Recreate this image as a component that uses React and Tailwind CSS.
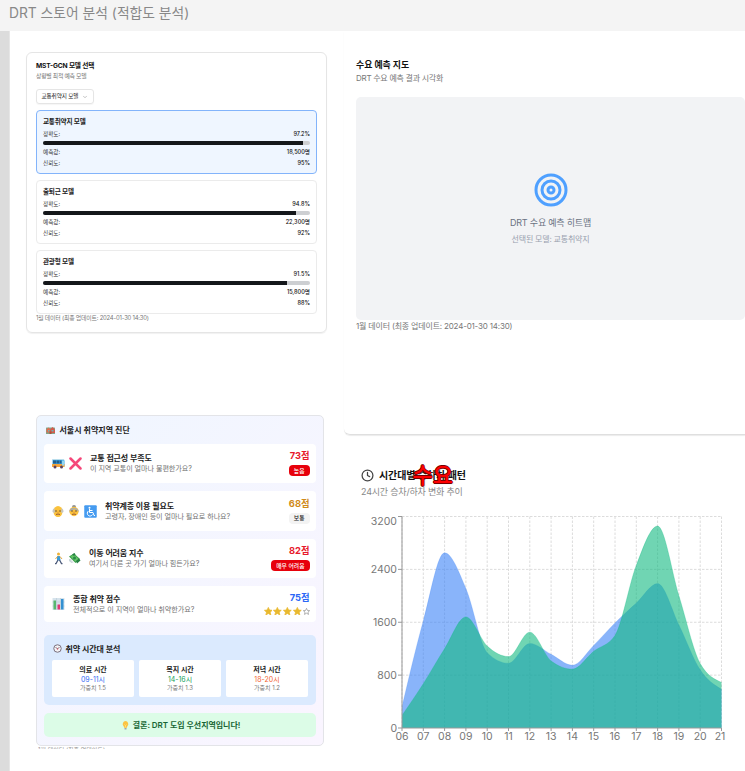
import React from "react";
import { ChevronDown, Clock } from "lucide-react";

const models = [
  { name: "교통취약지 모델", accuracy: "97.2%", value: 97.2, demand: "18,500명", trust: "95%", active: true },
  { name: "출퇴근 모델", accuracy: "94.8%", value: 94.8, demand: "22,300명", trust: "92%" },
  { name: "관광형 모델", accuracy: "91.5%", value: 91.5, demand: "15,800명", trust: "88%" },
];

function Row({ label, value }) {
  return (
    <div className="flex h-[11px] items-center justify-between text-[5.6px] leading-none text-[#333]">
      <span>{label}</span>
      <span className="font-medium text-[#111]">{value}</span>
    </div>
  );
}

function ModelCard({ model }) {
  return (
    <div
      className={
        "flex h-[64px] flex-col rounded-[4px] border px-[6px] pt-[6px] " +
        (model.active ? "border-[#83b4fb] bg-[#eff6ff]" : "border-[#ebebeb] bg-white")
      }
    >
      <div className="flex h-[10px] items-center text-[6.6px] font-semibold leading-none tracking-[-0.2px] text-[#222]">{model.name}</div>
      <div className="mt-[2px]">
        <Row label="정확도:" value={model.accuracy} />
      </div>
      <div className="mb-[3px] mt-px h-[3.5px] shrink-0 overflow-hidden rounded-full bg-[#cdcfd2]">
        <div className="h-full bg-[#14171a]" style={{ width: model.value + "%" }} />
      </div>
      <Row label="예측값:" value={model.demand} />
      <Row label="신뢰도:" value={model.trust} />
    </div>
  );
}

function Houses() {
  return (
    <svg viewBox="0 0 18 14" className="h-[7px] w-[9px]">
      <rect y="1" width="18" height="13" rx="1" fill="#7fa58a" />
      <path d="M1 5 5 1l4 4v6H1z" fill="#e26c4d" />
      <path d="M8 5 13 0l5 5v7H8z" fill="#d25b4c" />
      <path d="M4 6h3v3H4zM11 6h4v3h-4z" fill="#69b4b4" />
      <path d="M7 9h4v5H7z" fill="#ae5039" />
    </svg>
  );
}

function Bus() {
  return (
    <svg viewBox="0 0 26 22" className="h-[11px] w-[13px]">
      <path d="M1 3h23l1 3v11H1z" fill="#3ba5e7" />
      <path d="M0 12h25v6H0z" fill="#f6a43b" />
      <path d="M2 5h6v6H2zM9 5h5v6H9zM15 5h4v6h-4z" fill="#265e89" />
      <path d="M20 5h4v10h-4z" fill="#94d5ef" />
      <circle cx="6" cy="18" r="3" fill="#5b405d" />
      <circle cx="19" cy="18" r="3" fill="#5b405d" />
      <path d="M1 3h23" stroke="#b8ddec" strokeWidth="2" />
    </svg>
  );
}

function Cross() {
  return (
    <svg viewBox="0 0 26 26" className="h-[13px] w-[13px]">
      <path d="m3 3 20 20M23 3 3 23" stroke="#f5487a" strokeWidth="5" strokeLinecap="round" />
    </svg>
  );
}

function Elder({ woman }) {
  return (
    <svg viewBox="0 0 24 24" className="h-[12px] w-[12px]">
      {woman && <circle cx="12" cy="4" r="4" fill="#8f9092" />}
      {woman && <path d="M3 13C2 2 22 2 21 13l-1 3H4z" fill="#999b9d" />}
      <ellipse cx="12" cy="13" rx="9" ry={woman ? 9.5 : 11} fill="#fbc23c" />
      {woman ? (
        <path d="M3 12c1-8 15-9 18 0-4 0-6-2-9-4-2 3-5 4-9 4z" fill="#aaacae" />
      ) : (
        <path d="M1 13c0-3 1-6 4-6l1 8c-3 1-5 0-5-2zM23 13c0-3-1-6-4-6l-1 8c3 1 5 0 5-2z" fill="#c6c6c0" />
      )}
      <path d="M6 12h4M14 12h4" stroke="#785a34" strokeWidth="2" />
      <path d="M12 13v3" stroke="#e79534" strokeWidth="2" />
      <path d="M8 19q4-2 8 0" fill="none" stroke="#9b5a34" strokeWidth="2" />
    </svg>
  );
}

function Wheelchair() {
  return (
    <svg viewBox="0 0 26 26" className="h-[13px] w-[13px]">
      <rect x="0.5" y="0.5" width="25" height="25" rx="2" fill="#459bf0" />
      <circle cx="11" cy="5.5" r="2" fill="#fff" />
      <path d="M11 8v7h7l2 6h2M11 11h6" fill="none" stroke="#fff" strokeWidth="2" />
      <path d="M9 12a5.5 5.5 0 1 0 8 7" fill="none" stroke="#fff" strokeWidth="2" />
    </svg>
  );
}

function Walker() {
  return (
    <svg viewBox="0 0 24 26" className="h-[13px] w-[12px]">
      <circle cx="13" cy="4" r="3" fill="#efb238" />
      <path d="M10 8h6l1 9h-7z" fill="#3b9bd8" />
      <path d="m11 9-4 5M16 9l4 5" stroke="#e7a83c" strokeWidth="2" />
      <path d="m12 16-4 7H6M15 16l4 7h2" fill="none" stroke="#4a5878" strokeWidth="2.500" />
    </svg>
  );
}

function Money() {
  return (
    <svg viewBox="0 0 26 26" className="h-[13px] w-[13px]">
      <path d="m2 9 10-6 12 11-9 8z" fill="#3a9c4b" />
      <path d="m5 9 7-4 9 9-6 5z" fill="#65c567" />
      <path d="m8 5 5-3 2 3-3 3zM16 18l6-5 3 4-7 6z" fill="#258043" />
      <circle cx="13" cy="12" r="3" fill="#298947" />
      <path d="m2 14 7 1-3 3 6 2-5 2-5-4z" fill="#c8d4d8" />
    </svg>
  );
}

function BarEmoji() {
  return (
    <svg viewBox="0 0 24 24" className="h-[12px] w-[13px]">
      <rect width="24" height="24" rx="1" fill="#d6e3ec" />
      <path d="M0 8h24M0 16h24M8 0v24M16 0v24" stroke="#b3c4d0" />
      <rect x="2" y="5" width="5" height="18" fill="#57b870" />
      <rect x="10" y="13" width="5" height="10" fill="#e13774" />
      <rect x="17" y="2" width="5" height="21" fill="#3390d2" />
    </svg>
  );
}

function ClockEmoji() {
  return (
    <svg viewBox="0 0 18 18" className="h-[9px] w-[9px]">
      <circle cx="9" cy="9" r="7.5" fill="#f4f3f6" stroke="#79717e" strokeWidth="2" />
      <path d="m5 6 4 4 4-4" fill="none" stroke="#654c5a" strokeWidth="1.5" />
      <circle cx="9" cy="10" r="1.3" fill="#d24e5d" />
    </svg>
  );
}

function Bulb() {
  return (
    <svg viewBox="0 0 14 18" className="h-[9px] w-[7px]">
      <path d="M7 0a6 6 0 0 0-4 10l2 4h4l2-4A6 6 0 0 0 7 0z" fill="#fbc342" />
      <path d="m5 7 2 2 2-2M7 9v4" fill="none" stroke="#fff0a8" />
      <path d="M5 14h4v3H5z" fill="#9ca8ae" />
    </svg>
  );
}

function Stars() {
  return (
    <div className="flex h-[9px] items-center gap-[1px]">
      {[0, 1, 2, 3, 4].map((i) => (
        <svg key={i} viewBox="0 0 20 20" className={i < 4 ? "h-[8.700px] w-[8.700px]" : "h-[7px] w-[7px]"}>
          <path
            d="m10 1 2.700 6 6.300.6-4.800 4.200 1.500 6.500L10 14.900l-5.700 3.400 1.500-6.500L1 7.600 7.300 7z"
            fill={i < 4 ? "#e9b92f" : "#fff"}
            stroke={i < 4 ? "#e9b92f" : "#777"}
            strokeWidth={i < 4 ? 1.8 : 1.6}
            strokeLinejoin="round"
          />
        </svg>
      ))}
    </div>
  );
}

function Metric({ icons, title, question, score, scoreClass, children, rowClass }) {
  return (
    <div className={"flex items-center justify-between rounded-[4px] bg-white pl-[8px] pr-[6.500px] " + rowClass}>
      <div className="flex items-center gap-[8px]">
        <div className="flex items-center gap-[4px]">{icons}</div>
        <div className="flex flex-col gap-[3px] whitespace-nowrap">
          <span className="text-[8px] font-semibold leading-[8px] tracking-[-0.12px] text-[#222]">{title}</span>
          <span className="text-[7.100px] leading-[8px] tracking-[-0.06px] text-[#737373]">{question}</span>
        </div>
      </div>
      <div className="flex flex-col items-end gap-[4px]">
        <span className={"text-[9.3px] font-bold leading-[10px] " + scoreClass}>{score}</span>
        {children}
      </div>
    </div>
  );
}

const times = [
  { name: "의료 시간", range: "09-11시", weight: "가중치 1.5", color: "text-[#356df3]" },
  { name: "복지 시간", range: "14-16시", weight: "가중치 1.3", color: "text-[#16a15b]" },
  { name: "저녁 시간", range: "18-20시", weight: "가중치 1.2", color: "text-[#f26432]" },
];

const boarding = [320, 1620, 2650, 2110, 1140, 980, 1280, 1115, 950, 1250, 1590, 1890, 2185, 1560, 880, 585];
const alighting = [190, 670, 1200, 1680, 1240, 1080, 1450, 1015, 890, 1160, 1400, 2460, 3055, 2000, 975, 690];

const LEFT = 42;
const TOP = 6.5;
const WIDTH = 319.5;
const HEIGHT = 211.5;
const STEP = WIDTH / 15;
const BASE = TOP + HEIGHT;

// Monotone cubic area through hourly values.
function areaPath(values) {
  const pts = values.map((v, i) => [LEFT + i * STEP, BASE - (v / 3200) * HEIGHT]);
  const slopes = pts.slice(1).map((p, i) => (p[1] - pts[i][1]) / STEP);
  const n = pts.length;
  const t = new Array(n).fill(0);
  for (let i = 1; i < n - 1; i++) {
    const a = slopes[i - 1];
    const b = slopes[i];
    t[i] = (Math.sign(a) + Math.sign(b)) * Math.min(Math.abs(a), Math.abs(b), Math.abs(a + b) / 4);
  }
  t[0] = (3 * slopes[0] - t[1]) / 2;
  t[n - 1] = (3 * slopes[n - 2] - t[n - 2]) / 2;
  const d = STEP / 3;
  let path = `M${pts[0][0]},${pts[0][1]}`;
  for (let i = 1; i < n; i++) {
    const [x0, y0] = pts[i - 1];
    const [x1, y1] = pts[i];
    path += `C${x0 + d},${y0 + d * t[i - 1]} ${x1 - d},${y1 - d * t[i]} ${x1},${y1}`;
  }
  return { line: path, area: path + `L${LEFT + WIDTH},${BASE}L${LEFT},${BASE}Z` };
}

function Chart() {
  const blue = areaPath(boarding);
  const green = areaPath(alighting);
  const hours = boarding.map((_, i) => String(i + 6).padStart(2, "0"));
  return (
    <svg width="385" height="240" viewBox="0 0 385 240" className="block">
      <g stroke="#dcdcdc" strokeDasharray="2.500 1.500">
        {hours.map((h, i) => (
          <line key={h} x1={LEFT + i * STEP} x2={LEFT + i * STEP} y1={TOP} y2={BASE} />
        ))}
        {[0, 1, 2, 3].map((i) => (
          <line key={i} x1={LEFT} x2={LEFT + WIDTH} y1={TOP + (i * HEIGHT) / 4} y2={TOP + (i * HEIGHT) / 4} />
        ))}
      </g>
      <path d={blue.area} fill="#3b82f6" fillOpacity="0.6" />
      <path d={blue.line} fill="none" stroke="#3b82f6" strokeOpacity="0.3" strokeWidth="0.7" />
      <path d={green.area} fill="#10b981" fillOpacity="0.6" />
      <path d={green.line} fill="none" stroke="#10b981" strokeOpacity="0.4" strokeWidth="0.7" />
      <g stroke="#999">
        <path d={`M${LEFT},${TOP}V${BASE}H${LEFT + WIDTH}`} fill="none" />
        {[0, 1, 2, 3, 4].map((i) => (
          <line key={i} x1={LEFT - 4} x2={LEFT} y1={TOP + (i * HEIGHT) / 4} y2={TOP + (i * HEIGHT) / 4} />
        ))}
        {hours.map((h, i) => (
          <line key={h} x1={LEFT + i * STEP} x2={LEFT + i * STEP} y1={BASE} y2={BASE + 3} />
        ))}
      </g>
      <g fill="#777" fontSize="10.500">
        {[3200, 2400, 1600, 800, 0].map((v, i) => (
          <text key={v} x={LEFT - 5} y={TOP + (i * HEIGHT) / 4 + (i === 0 ? 8 : 4)} textAnchor="end">
            {v}
          </text>
        ))}
        {hours.map((h, i) => (
          <text key={h} x={LEFT + i * STEP - (i === 15 ? 1.5 : 0)} y={BASE + 12} textAnchor="middle" fontSize="10.500">
            {h}
          </text>
        ))}
      </g>
    </svg>
  );
}

export default function App() {
  return (
    <div className="h-[771px] w-[745px] overflow-hidden bg-white font-[Inter,'Noto_Sans_CJK_KR',sans-serif] text-[#111]">
      <header className="flex h-[31px] items-center bg-[#f4f4f4] pb-[4px] pl-[9px] text-[13.800px] leading-none text-[#888]">
        <span className="whitespace-nowrap">DRT 스토어 분석 (적합도 분석)</span>
      </header>
      <div className="flex h-[740px]">
        <div className="w-[10px] shrink-0 border-r border-[#e6e6e6] bg-[#dcdcdc]" />
        <div className="ml-[16px] flex w-[301px] shrink-0 flex-col pt-[21px]">
          <section className="flex h-[281px] shrink-0 flex-col rounded-[6px] border border-[#e5e5e5] px-[9px] pt-[8px] shadow-[0_1px_1px_rgba(0,0,0,0.06)]">
            <h2 className="flex h-[10px] items-center text-[6.700px] font-bold leading-none tracking-[-0.2px]">MST-GCN 모델 선택</h2>
            <p className="flex h-[10px] items-center text-[5.900px] leading-none tracking-[-0.28px] text-[#777]">상황별 최적 예측 모델</p>
            <button className="mt-[8px] flex h-[15px] w-[58px] items-center justify-between rounded-[3px] border border-[#e5e5e5] pl-[4.500px] pr-[5px] text-[5.600px] leading-none tracking-[-0.1px] text-[#222] shadow-[0_1px_1px_rgba(0,0,0,0.04)]">
              <span className="whitespace-nowrap">교통취약지 모델</span>
              <ChevronDown size={6} className="shrink-0" color="#888" />
            </button>
            <div className="mt-[6px] flex flex-col gap-[6px]">
              {models.map((m) => (
                <ModelCard key={m.name} model={m} />
              ))}
            </div>
            <p className="text-[5.900px] leading-[7px] tracking-[-0.2px] text-[#777]">1월 데이터 (최종 업데이트: 2024-01-30 14:30)</p>
          </section>

          <section className="ml-[10px] mt-[82px] flex h-[331px] w-[288px] shrink-0 flex-col rounded-[5px] border border-[#e3e4e8] bg-gradient-to-br from-[#eff6ff] to-[#faf5ff] px-[7px] pt-[9px]">
            <h2 className="flex h-[10px] items-center gap-[5px] pl-[1.500px] text-[8px] font-semibold leading-none text-[#222]">
              <Houses />
              서울시 취약지역 진단
            </h2>
            <div className="mt-[9px] flex flex-col gap-[8px]">
              <Metric
                rowClass="h-[39px]"
                icons={<><Bus /><Cross /></>}
                title="교통 접근성 부족도"
                question="이 지역 교통이 얼마나 불편한가요?"
                score="73점"
                scoreClass="text-[#e7192c]"
              >
                <span className="flex h-[11px] items-center rounded-[4px] bg-[#e7000b] px-[5px] text-[5.800px] font-medium leading-none text-white">높음</span>
              </Metric>
              <Metric
                rowClass="h-[40px]"
                icons={<><Elder /><Elder woman /><Wheelchair /></>}
                title="취약계층 이용 필요도"
                question="고령자, 장애인 등이 얼마나 필요로 하나요?"
                score="68점"
                scoreClass="text-[#d08a1a]"
              >
                <span className="flex h-[11px] items-center rounded-[4px] bg-[#f3f3f3] px-[5px] text-[5.800px] font-medium leading-none text-[#222]">보통</span>
              </Metric>
              <Metric
                rowClass="h-[39px]"
                icons={<><Walker /><Money /></>}
                title="이동 어려움 지수"
                question="여기서 다른 곳 가기 얼마나 힘든가요?"
                score="82점"
                scoreClass="text-[#e7192c]"
              >
                <span className="flex h-[11px] items-center rounded-[4px] bg-[#e7000b] px-[5px] text-[5.800px] font-medium leading-none text-white">매우 어려움</span>
              </Metric>
              <Metric
                rowClass="h-[36px]"
                icons={<BarEmoji />}
                title="종합 취약 점수"
                question="전체적으로 이 지역이 얼마나 취약한가요?"
                score="75점"
                scoreClass="text-[#2b67f6]"
              >
                <Stars />
              </Metric>
            </div>
            <div className="mt-[13px] flex h-[70px] flex-col rounded-[5px] bg-[#dbeafe] px-[8px] pt-[9px]">
              <h3 className="flex h-[9px] items-center gap-[4px] pl-[0.500px] text-[8px] font-semibold leading-none tracking-[-0.1px] text-[#222]">
                <ClockEmoji />
                취약 시간대 분석
              </h3>
              <div className="mt-[7px] grid grid-cols-3 gap-[5px]">
                {times.map((t) => (
                  <div key={t.name} className="flex h-[37px] flex-col items-center rounded-[2px] bg-white pt-[5px]">
                    <span className="text-[7px] font-semibold leading-[10px] text-[#222]">{t.name}</span>
                    <span className={"text-[7px] leading-[9px] " + t.color}>{t.range}</span>
                    <span className="text-[6px] leading-[8px] text-[#777]">{t.weight}</span>
                  </div>
                ))}
              </div>
            </div>
            <div className="mt-[8px] flex h-[24px] shrink-0 items-center justify-center gap-[4px] rounded-[5px] bg-[#dcfce7] pl-[2px] text-[8px] font-semibold leading-none tracking-[-0.05px] text-[#176534]">
              <Bulb />
              결론: DRT 도입 우선지역입니다!
            </div>
          </section>
          <div className="ml-[12px] mt-px h-[2px] shrink-0 overflow-hidden text-[6px] leading-[6px] text-[#999]">1월 데이터 (최종 업데이트)</div>
        </div>

        <div className="ml-[17px] flex w-[401px] shrink-0 flex-col">
          <section className="flex h-[404px] shrink-0 flex-col rounded-bl-[6px] border-b border-[#dfdfdf] pl-[12px] pt-[28px] shadow-[0_1px_1px_rgba(0,0,0,0.08)]">
            <h2 className="flex h-[12px] items-center text-[8.900px] font-bold leading-none">수요 예측 지도</h2>
            <p className="mt-[1px] flex h-[12px] items-center text-[8px] leading-none tracking-[-0.27px] text-[#777]">DRT 수요 예측 결과 시각화</p>
            <div className="mt-[13px] flex h-[223px] flex-col items-center rounded-[5px] bg-[#f2f3f5] pt-[76px]">
              <svg viewBox="0 0 34 34" className="h-[34px] w-[34px]" fill="none" stroke="#4fa0ff" strokeWidth="3">
                <circle cx="17" cy="17" r="15" />
                <circle cx="17" cy="17" r="9" />
                <circle cx="17" cy="17" r="3" />
              </svg>
              <p className="mt-[10px] text-[9px] leading-[12px] tracking-[-0.2px] text-[#6a7282]">DRT 수요 예측 히트맵</p>
              <p className="mt-[5px] text-[8px] leading-[11px] tracking-[-0.2px] text-[#99a1af]">선택된 모델: 교통취약지</p>
            </div>
            <p className="mt-[1px] text-[8px] leading-[10px] tracking-[-0.18px] text-[#777]">1월 데이터 (최종 업데이트: 2024-01-30 14:30)</p>
          </section>
          <section className="relative flex flex-col pt-[33px]">
            <h2 className="flex h-[14px] items-center gap-[5px] pl-[17px] text-[10px] font-semibold leading-none tracking-[-0.08px]">
              <Clock size={13} strokeWidth={2.3} color="#444" />
              시간대별 승하차 패턴
            </h2>
            <p className="mt-[4px] h-[11px] pl-[17px] text-[9px] leading-[11px] tracking-[-0.2px] text-[#888]">24시간 승차/하차 변화 추이</p>
            <div className="ml-[16px] mt-[13px]">
              <Chart />
            </div>
            <span className="absolute left-[68.500px] top-[28px] whitespace-nowrap text-[22px] font-medium leading-[24px] text-[#ff0000] [text-shadow:0.7px_0_0_#700,-0.7px_0_0_#700,0_0.7px_0_#700,0_-0.7px_0_#700,1px_1px_1px_#8888]">수요</span>
          </section>
        </div>
      </div>
    </div>
  );
}
